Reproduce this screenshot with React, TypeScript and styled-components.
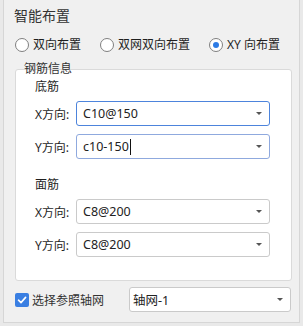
import React, { useState } from 'react';
import styled, { createGlobalStyle } from 'styled-components';

const GlobalStyle = createGlobalStyle`
  html, body {
    margin: 0;
    padding: 0;
    background: #e9e9e9;
  }
  body {
    font-family: "Noto Sans", "Noto Sans CJK SC", sans-serif;
    color: #1f1f1f;
  }
  * {
    box-sizing: border-box;
  }
`;

const Panel = styled.div`
  margin-left: 3px;
  width: 297px;
  height: 323px;
  background: #f0f0f0;
  border: 1px solid #d6d6d6;
  border-top: none;
  padding: 6px 6px 0 11px;
  display: flex;
  flex-direction: column;
`;

const Title = styled.div`
  margin-left: -1px;
  font-size: 14px;
  line-height: 20px;
  color: #333;
`;

const RadioRow = styled.div`
  margin-top: 8px;
  display: flex;
  align-items: center;
  gap: 19px;
  height: 21px;
`;

const RadioItem = styled.label`
  display: flex;
  align-items: center;
  gap: 4px;
  font-size: 12px;
  line-height: 20px;
  cursor: default;
`;

const RadioCircle = styled.span<{ checked?: boolean }>`
  width: 14px;
  height: 14px;
  border-radius: 50%;
  border: 1px solid #7f7f7f;
  background: #fff;
  display: flex;
  align-items: center;
  justify-content: center;
  &::after {
    content: '';
    display: ${({ checked }) => (checked ? 'block' : 'none')};
    width: 6px;
    height: 6px;
    border-radius: 50%;
    background: #2c7be5;
  }
`;

const GroupBox = styled.div`
  position: relative;
  margin-top: 14px;
  width: 277px;
  background: #fff;
  border: 1px solid #dadada;
  border-radius: 3px;
  padding: 8px 0 23px 19px;
`;

const Legend = styled.span`
  position: absolute;
  left: 8px;
  top: -7px;
  font-size: 12px;
  line-height: 12px;
  color: #333;
`;

const SectionTitle = styled.div<{ spaced?: boolean }>`
  font-size: 12px;
  line-height: 18px;
  margin-top: ${({ spaced }) => (spaced ? '17px' : '0')};
  margin-bottom: 5px;
`;

const FieldGrid = styled.div`
  display: grid;
  grid-template-columns: 34px 194px;
  column-gap: 7px;
  row-gap: 8px;
  align-items: center;
`;

const FieldLabel = styled.span`
  font-size: 12px;
  text-align: right;
  white-space: nowrap;
`;

const Combo = styled.div<{ tone?: 'focus' | 'hover' | 'plain'; pad?: number; width?: number }>`
  height: 25px;
  width: ${({ width }) => (width ? `${width}px` : 'auto')};
  border: 1px solid
    ${({ tone }) =>
      tone === 'focus' ? '#4d84dc' : tone === 'hover' ? '#8fa9de' : '#cacaca'};
  border-radius: 3px;
  background: #fff;
  display: flex;
  align-items: center;
  padding: 0 7px 0 ${({ pad }) => pad ?? 6}px;
  font-size: 12.5px;
  color: #222;
`;

const ComboText = styled.span`
  flex: 1;
  display: flex;
  align-items: center;
  white-space: nowrap;
`;

const Caret = styled.span`
  width: 1px;
  height: 16px;
  background: #111;
  margin-left: 1px;
`;

const Arrow = styled.span`
  width: 0;
  height: 0;
  border-left: 3px solid transparent;
  border-right: 3px solid transparent;
  border-top: 3px solid #555;
`;

const BottomRow = styled.div`
  margin-top: 6px;
  display: flex;
  align-items: center;
`;

const CheckLabel = styled.label`
  display: flex;
  align-items: center;
  gap: 3px;
  width: 114px;
  font-size: 12px;
  color: #333;
`;

const CheckBox = styled.span`
  width: 14px;
  height: 14px;
  border-radius: 2px;
  background: #3a7fe2;
  display: flex;
  align-items: center;
  justify-content: center;
`;

function Select({
  value,
  tone,
  caret,
  pad,
  width,
}: {
  value: string;
  tone?: 'focus' | 'hover' | 'plain';
  caret?: boolean;
  pad?: number;
  width?: number;
}) {
  return (
    <Combo tone={tone} pad={pad} width={width}>
      <ComboText>
        {value}
        {caret && <Caret />}
      </ComboText>
      <Arrow />
    </Combo>
  );
}

export default function App(): React.JSX.Element {
  const [mode, setMode] = useState<number>(2);
  const modes = ['双向布置', '双网双向布置', 'XY 向布置'];

  return (
    <>
      <GlobalStyle />
      <Panel>
        <Title>智能布置</Title>
        <RadioRow>
          {modes.map((m, i) => (
            <RadioItem key={m} onClick={() => setMode(i)}>
              <RadioCircle checked={mode === i} />
              {m}
            </RadioItem>
          ))}
        </RadioRow>
        <GroupBox>
          <Legend>钢筋信息</Legend>
          <SectionTitle>底筋</SectionTitle>
          <FieldGrid>
            <FieldLabel>X方向:</FieldLabel>
            <Select value="C10@150" tone="focus" />
            <FieldLabel>Y方向:</FieldLabel>
            <Select value="c10-150" tone="hover" caret />
          </FieldGrid>
          <SectionTitle spaced>面筋</SectionTitle>
          <FieldGrid>
            <FieldLabel>X方向:</FieldLabel>
            <Select value="C8@200" />
            <FieldLabel>Y方向:</FieldLabel>
            <Select value="C8@200" />
          </FieldGrid>
        </GroupBox>
        <BottomRow>
          <CheckLabel>
            <CheckBox>
              <svg width="10" height="10" viewBox="0 0 10 10">
                <path d="M1.5 5.2 L4 7.6 L8.6 2.4" fill="none" stroke="#fff" strokeWidth="1.6" strokeLinecap="round" strokeLinejoin="round" />
              </svg>
            </CheckBox>
            选择参照轴网
          </CheckLabel>
          <Select value="轴网-1" pad={3} width={162} />
        </BottomRow>
      </Panel>
    </>
  );
}
